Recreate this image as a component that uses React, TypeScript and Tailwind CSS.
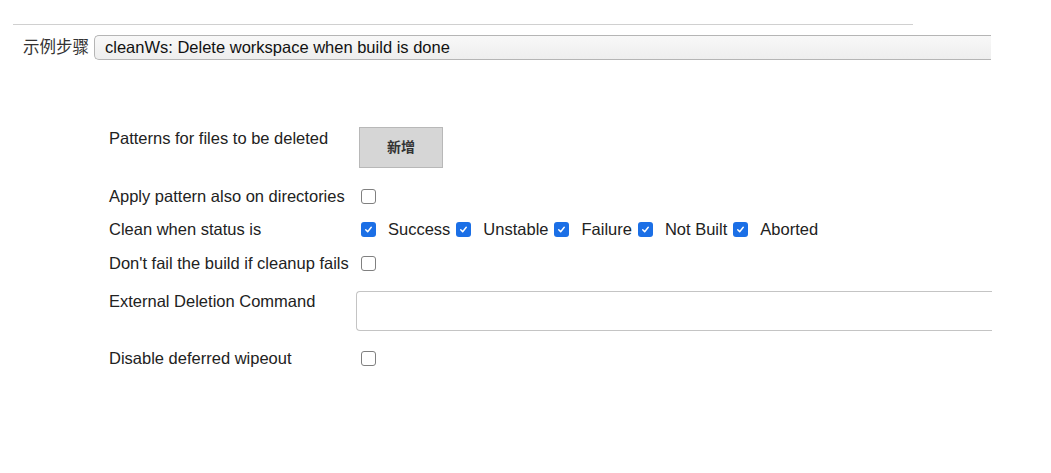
import React from 'react';

const font = { fontFamily: '"Liberation Sans", Arial, "Noto Sans CJK SC", sans-serif' };

const Box = ({ checked = false }: { checked?: boolean }) =>
  checked ? (
    <span className="flex h-[15px] w-[15px] shrink-0 items-center justify-center rounded-[3px] bg-[#1b6fe6]">
      <svg viewBox="0 0 12 12" className="h-[11px] w-[11px]">
        <path d="M3 6.3 L5.1 8.4 L9 3.6" fill="none" stroke="white" strokeWidth="1.6" strokeLinecap="round" strokeLinejoin="round" />
      </svg>
    </span>
  ) : (
    <span className="block h-[15px] w-[15px] shrink-0 rounded-[3px] border border-[#808080] bg-white" />
  );

const Row = ({ label, className = '', labelClass = '', children }: { label: string; className?: string; labelClass?: string; children?: React.ReactNode }) => (
  <div className={`flex ${className}`}>
    <div className={`w-[247px] shrink-0 ${labelClass}`}>{label}</div>
    <div className="flex flex-1 items-center">{children}</div>
  </div>
);

const statuses = ['Success', 'Unstable', 'Failure', 'Not Built', 'Aborted'];

export default function App() {
  return (
    <div className="h-[473px] w-[1051px] overflow-hidden bg-white text-[16.5px] leading-[19px] text-[#222]" style={font}>
      {/* top rule */}
      <div className="flex items-center pt-[24px]">
        <div className="ml-[13px] h-px w-[900px] bg-[#d0d0d0]" />
      </div>

      {/* step selector */}
      <div className="mt-[10px] flex items-center">
        <span className="ml-[23px] mr-[5px] text-[#333]">示例步骤</span>
        <div className="flex h-[25px] w-[897px] items-center rounded-l-[5px] border border-[#b5b5b5] border-r-0 bg-gradient-to-b from-[#f8f8f8] to-[#eeeeee] pl-[10px] text-[#111]">
          cleanWs: Delete workspace when build is done
        </div>
      </div>

      <div className="ml-[109px] mt-[67px] flex flex-col">
        <Row label="Patterns for files to be deleted" className="h-[53px] items-start" labelClass="mt-[2px]">
          <button className="ml-[3px] flex h-[41px] w-[84px] items-center justify-center border border-[#b8b8b8] bg-[#d6d6d6] text-[14px] font-bold text-[#333]">
            新增
          </button>
        </Row>
        <Row label="Apply pattern also on directories" className="h-[33px] items-center">
          <span className="ml-[5px] flex"><Box /></span>
        </Row>
        <Row label="Clean when status is" className="h-[33px] items-center">
          <div className="ml-[5px] flex items-center">
            {statuses.map((s) => (
              <span key={s} className="flex items-center">
                <Box checked />
                <span className="ml-[12px] mr-[6px]">{s}</span>
              </span>
            ))}
          </div>
        </Row>
        <Row label="Don't fail the build if cleanup fails" className="h-[34px] items-center">
          <span className="ml-[5px] flex"><Box /></span>
        </Row>
        <Row label="External Deletion Command" className="mt-[12px] h-[55px] items-start">
          <div className="-mt-[1px] h-[40px] w-[636px] rounded-l-[4px] border border-r-0 border-[#c4c4c4] bg-white" />
        </Row>
        <Row label="Disable deferred wipeout" className="h-[22px] items-center">
          <span className="ml-[5px] flex"><Box /></span>
        </Row>
      </div>
    </div>
  );
}
